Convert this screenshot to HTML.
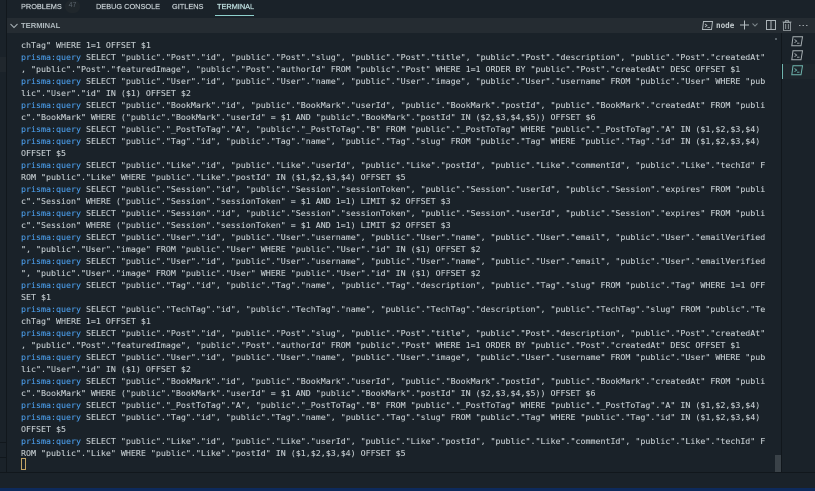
<!DOCTYPE html>
<html><head><meta charset="utf-8"><style>
html,body{margin:0;padding:0;width:815px;height:491px;overflow:hidden;background:#1a2229}
*{box-sizing:border-box}
.a{position:absolute}
#t{position:absolute;left:21px;top:38.6px;margin:0;font:8.3px/12px "DejaVu Sans Mono","Liberation Mono",monospace;color:#c2cace;white-space:pre;-webkit-text-stroke:.12px #c2cace}
#t b{font-weight:normal;color:#4a9be6;-webkit-text-stroke:.12px #4a9be6}
.tab{position:absolute;top:0;height:13px;font:7.35px/13px "Liberation Sans",sans-serif;color:#c3ccd0;white-space:nowrap;-webkit-text-stroke:.22px #c3ccd0}
svg{position:absolute;overflow:visible}
</style></head><body>
<div class="a" style="left:0;top:0;width:815px;height:18px;background:#1a2229"></div>
<div class="a" style="left:7px;top:18px;width:808px;height:15px;background:#252c32"></div>
<div class="a" style="left:6px;top:0;width:1px;height:472px;background:#11171c"></div>
<div class="a" style="left:0;top:57px;width:6px;height:15px;background:#20272d"></div>
<div class="a" style="left:0;top:442px;width:6px;height:1px;background:#11171c"></div>
<div class="a" style="left:0;top:457px;width:6px;height:1px;background:#11171c"></div>
<div class="tab" style="left:21px;top:0">PROBLEMS</div>
<div class="a" style="left:65px;top:0;width:15px;height:13px;border-radius:7px;background:#20272c;color:#58626a;font:7px/12px 'Liberation Sans',sans-serif;text-align:center">47</div>
<div class="tab" style="left:96px">DEBUG CONSOLE</div>
<div class="tab" style="left:172px">GITLENS</div>
<div class="tab" style="left:217px;color:#bfe0e0;-webkit-text-stroke:.22px #bfe0e0">TERMINAL</div>
<div class="a" style="left:215px;top:15px;width:39px;height:1px;background:#8fd0cc"></div>
<svg style="left:10px;top:23px" width="8" height="6"><path d="M.5 1l3.5 3.5L7.5 1" fill="none" stroke="#aab3b8"/></svg>
<div class="tab" style="left:21px;top:19px;color:#aeb8bd;font:bold 7.6px/13px 'Liberation Sans',sans-serif;-webkit-text-stroke:0">TERMINAL</div>

<svg style="left:702px;top:20px" width="11" height="11"><path d="M1.5 1.5h9l-1 8h-9z" fill="none" stroke="#aeb6ba"/><path d="M3 4l2 1.5-2 1.5M5.5 7.5h2.5" fill="none" stroke="#aeb6ba" stroke-width=".8"/></svg>
<div class="a" style="left:716px;top:19px;font:bold 7.6px/13px 'DejaVu Sans Mono',monospace;color:#c3cbce">node</div>
<svg style="left:740px;top:20px" width="10" height="10"><path d="M4.5 .5v9M0 5h9" stroke="#b4bcc0" stroke-width="1" fill="none"/></svg>
<svg style="left:752px;top:23px" width="6" height="4"><path d="M.5.5L3 3 5.5.5" fill="none" stroke="#7f888d"/></svg>
<svg style="left:766px;top:20px" width="10" height="10"><path d="M.5.5h9v9h-9zM5 .5v9" fill="none" stroke="#aab2b6"/></svg>
<svg style="left:782px;top:20px" width="10" height="11"><path d="M1.5 2.5h7v8h-7zM.5 2h9M3.5 2V.7h3V2M3.7 4v5M6.3 4v5" fill="none" stroke="#a4acb0" stroke-width=".8"/></svg>
<div class="a" style="left:799px;top:25px;width:9px;height:1px;background:repeating-linear-gradient(90deg,#99a1a5 0 1.5px,transparent 1.5px 3.5px)"></div>

<pre id="t"><span>chTag" WHERE 1=1 OFFSET $1
<b>prisma:query</b> SELECT "public"."Post"."id", "public"."Post"."slug", "public"."Post"."title", "public"."Post"."description", "public"."Post"."createdAt"
, "public"."Post"."featuredImage", "public"."Post"."authorId" FROM "public"."Post" WHERE 1=1 ORDER BY "public"."Post"."createdAt" DESC OFFSET $1
<b>prisma:query</b> SELECT "public"."User"."id", "public"."User"."name", "public"."User"."image", "public"."User"."username" FROM "public"."User" WHERE "pub
lic"."User"."id" IN ($1) OFFSET $2
<b>prisma:query</b> SELECT "public"."BookMark"."id", "public"."BookMark"."userId", "public"."BookMark"."postId", "public"."BookMark"."createdAt" FROM "publi
c"."BookMark" WHERE ("public"."BookMark"."userId" = $1 AND "public"."BookMark"."postId" IN ($2,$3,$4,$5)) OFFSET $6
<b>prisma:query</b> SELECT "public"."_PostToTag"."A", "public"."_PostToTag"."B" FROM "public"."_PostToTag" WHERE "public"."_PostToTag"."A" IN ($1,$2,$3,$4)
<b>prisma:query</b> SELECT "public"."Tag"."id", "public"."Tag"."name", "public"."Tag"."slug" FROM "public"."Tag" WHERE "public"."Tag"."id" IN ($1,$2,$3,$4)
OFFSET $5
<b>prisma:query</b> SELECT "public"."Like"."id", "public"."Like"."userId", "public"."Like"."postId", "public"."Like"."commentId", "public"."Like"."techId" F
ROM "public"."Like" WHERE "public"."Like"."postId" IN ($1,$2,$3,$4) OFFSET $5
<b>prisma:query</b> SELECT "public"."Session"."id", "public"."Session"."sessionToken", "public"."Session"."userId", "public"."Session"."expires" FROM "publi
c"."Session" WHERE ("public"."Session"."sessionToken" = $1 AND 1=1) LIMIT $2 OFFSET $3
<b>prisma:query</b> SELECT "public"."Session"."id", "public"."Session"."sessionToken", "public"."Session"."userId", "public"."Session"."expires" FROM "publi
c"."Session" WHERE ("public"."Session"."sessionToken" = $1 AND 1=1) LIMIT $2 OFFSET $3
<b>prisma:query</b> SELECT "public"."User"."id", "public"."User"."username", "public"."User"."name", "public"."User"."email", "public"."User"."emailVerified
", "public"."User"."image" FROM "public"."User" WHERE "public"."User"."id" IN ($1) OFFSET $2
<b>prisma:query</b> SELECT "public"."User"."id", "public"."User"."username", "public"."User"."name", "public"."User"."email", "public"."User"."emailVerified
", "public"."User"."image" FROM "public"."User" WHERE "public"."User"."id" IN ($1) OFFSET $2
<b>prisma:query</b> SELECT "public"."Tag"."id", "public"."Tag"."name", "public"."Tag"."description", "public"."Tag"."slug" FROM "public"."Tag" WHERE 1=1 OFF
SET $1
<b>prisma:query</b> SELECT "public"."TechTag"."id", "public"."TechTag"."name", "public"."TechTag"."description", "public"."TechTag"."slug" FROM "public"."Te
chTag" WHERE 1=1 OFFSET $1
<b>prisma:query</b> SELECT "public"."Post"."id", "public"."Post"."slug", "public"."Post"."title", "public"."Post"."description", "public"."Post"."createdAt"
, "public"."Post"."featuredImage", "public"."Post"."authorId" FROM "public"."Post" WHERE 1=1 ORDER BY "public"."Post"."createdAt" DESC OFFSET $1
<b>prisma:query</b> SELECT "public"."User"."id", "public"."User"."name", "public"."User"."image", "public"."User"."username" FROM "public"."User" WHERE "pub
lic"."User"."id" IN ($1) OFFSET $2
<b>prisma:query</b> SELECT "public"."BookMark"."id", "public"."BookMark"."userId", "public"."BookMark"."postId", "public"."BookMark"."createdAt" FROM "publi
c"."BookMark" WHERE ("public"."BookMark"."userId" = $1 AND "public"."BookMark"."postId" IN ($2,$3,$4,$5)) OFFSET $6
<b>prisma:query</b> SELECT "public"."_PostToTag"."A", "public"."_PostToTag"."B" FROM "public"."_PostToTag" WHERE "public"."_PostToTag"."A" IN ($1,$2,$3,$4)
<b>prisma:query</b> SELECT "public"."Tag"."id", "public"."Tag"."name", "public"."Tag"."slug" FROM "public"."Tag" WHERE "public"."Tag"."id" IN ($1,$2,$3,$4)
OFFSET $5
<b>prisma:query</b> SELECT "public"."Like"."id", "public"."Like"."userId", "public"."Like"."postId", "public"."Like"."commentId", "public"."Like"."techId" F
ROM "public"."Like" WHERE "public"."Like"."postId" IN ($1,$2,$3,$4) OFFSET $5</span></pre>
<div class="a" style="left:21px;top:458px;width:5px;height:12px;border:1px solid #c2a465"></div>

<div class="a" style="left:775px;top:38px;width:2px;height:2px;background:#59636a"></div>
<div class="a" style="left:775px;top:455px;width:6px;height:17px;background:#3a4248"></div>
<div class="a" style="left:781px;top:33px;width:1px;height:439px;background:#11171c"></div>
<div class="a" style="left:782px;top:64px;width:33px;height:15px;background:#1e262c"></div>
<div class="a" style="left:782px;top:64px;width:1px;height:15px;background:#6fb5ae"></div>
<svg style="left:791px;top:36px" width="12" height="11"><path d="M2 .8h9.5l-1.5 9H.8z" fill="none" stroke="#a7afb3"/><path d="M3.5 3.5l2.2 1.6-2.2 1.6M6 7.2h2.5" fill="none" stroke="#a7afb3" stroke-width=".8"/></svg>
<svg style="left:791px;top:50px" width="12" height="11"><path d="M2 .8h9.5l-1.5 9H.8z" fill="none" stroke="#a7afb3"/><path d="M3.5 3.5l2.2 1.6-2.2 1.6M6 7.2h2.5" fill="none" stroke="#a7afb3" stroke-width=".8"/></svg>
<svg style="left:791px;top:65px" width="12" height="11"><path d="M2 .8h9.5l-1.5 9H.8z" fill="none" stroke="#6fb5ae"/><path d="M3.5 3.5l2.2 1.6-2.2 1.6M6 7.2h2.5" fill="none" stroke="#6fb5ae" stroke-width=".8"/></svg>

<div class="a" style="left:0;top:472px;width:815px;height:1px;background:#11171c"></div>
<div class="a" style="left:0;top:473px;width:815px;height:15px;background:#1a2229"></div>
<div class="a" style="left:0;top:488px;width:815px;height:3px;background:#0d2a5c"></div>
</body></html>
